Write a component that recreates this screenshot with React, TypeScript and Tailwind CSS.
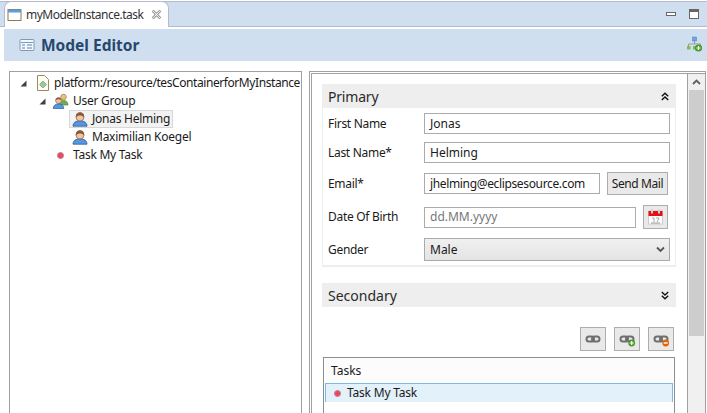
const font = { fontFamily: '"Noto Sans", sans-serif' };

function Person({ className = "" }: { className?: string }) {
  return (
    <svg width="16" height="16" viewBox="0 0 16 16" className={`shrink-0 ${className}`}>
      <path d="M1 15.2c0-3.6 3-5.4 7-5.4s7 1.8 7 5.4z" fill="#5596e0" stroke="#2b5f9e" strokeWidth="0.8" />
      <circle cx="8" cy="6" r="4" fill="#efc4a4" stroke="#a0694a" strokeWidth="0.8" />
      <path d="M3.9 6.4C3.4 2.8 5.8 1.2 8 1.2s4.6 1.6 4.1 5.2C11 4.8 9.2 4.4 8 4.4s-3 .4-4.1 2z" fill="#8a5a38" />
    </svg>
  );
}

function Group() {
  return (
    <svg width="18" height="16" viewBox="0 0 18 16" className="shrink-0">
      <circle cx="11.5" cy="4" r="2.8" fill="#e9c27e" stroke="#a08040" strokeWidth="0.7" />
      <path d="M7 12c0-3 2-4.5 4.5-4.5S16 9 16 12z" fill="#6fae4c" stroke="#4f8a36" strokeWidth="0.7" />
      <circle cx="6.5" cy="7.6" r="2.9" fill="#efc4a4" stroke="#a0694a" strokeWidth="0.7" />
      <path d="M3.6 7.4C3.4 5.4 5 4.4 6.5 4.4s3.1 1 2.9 3C8.4 6.4 7.2 6.2 6.5 6.2s-1.9.2-2.9 1.2z" fill="#8a5a38" />
      <path d="M1.2 15.5c0-3 2.2-4.6 5.3-4.6s5.3 1.6 5.3 4.6z" fill="#5596e0" stroke="#2b5f9e" strokeWidth="0.7" />
    </svg>
  );
}

function Tri() {
  return (
    <svg width="7" height="7" viewBox="0 0 7 7" className="shrink-0">
      <path d="M6.5 0.5V6.5H0.5z" fill="#404040" />
    </svg>
  );
}

function Dot({ className = "" }: { className?: string }) {
  return (
    <span className={`block h-[7px] w-[7px] shrink-0 rounded-full border border-[#c08090] bg-[#e84a58] ${className}`} />
  );
}

function Chevrons({ up }: { up?: boolean }) {
  return (
    <svg width="8" height="9" viewBox="0 0 8 9" className={up ? "" : "rotate-180"}>
      <path d="M0.8 4.2 4 1.2 7.2 4.2M0.8 8 4 5 7.2 8" fill="none" stroke="#111" strokeWidth="1.4" />
    </svg>
  );
}

function Field({ label, children, className = "" }: { label: string; children: React.ReactNode; className?: string }) {
  return (
    <div className={`flex items-center ${className}`}>
      <span className="w-[96px] shrink-0 text-[12px] leading-[16px] tracking-[-0.3px] text-[#1a1a1a]">{label}</span>
      {children}
    </div>
  );
}

function Input({ value, className = "", muted }: { value: string; className?: string; muted?: boolean }) {
  return (
    <div className={`flex items-center border border-[#ababab] bg-white pl-[5px] text-[12px] leading-[16px] ${muted ? "text-[#777]" : "text-[#1a1a1a]"} ${className}`}>
      {value}
    </div>
  );
}

function Link({ badge }: { badge?: "add" | "remove" }) {
  return (
    <svg width="18" height="16" viewBox="0 0 18 16">
      <rect x="2.5" y="5.5" width="7.5" height="5" rx="2.5" fill="none" stroke="#6e6e6e" strokeWidth="2" />
      <rect x="8" y="5.5" width="7.5" height="5" rx="2.5" fill="none" stroke="#6e6e6e" strokeWidth="2" />
      {badge && <circle cx="13.7" cy="12" r="3.4" fill={badge === "add" ? "#4a9a2c" : "#e0640c"} />}
      {badge === "add" && <path d="M13.7 10v4M11.7 12h4" stroke="#fff" strokeWidth="1.2" />}
      {badge === "remove" && <path d="M11.7 12h4" stroke="#fff" strokeWidth="1.4" />}
    </svg>
  );
}

function IconButton({ children }: { children: React.ReactNode }) {
  return (
    <div className="flex h-[24px] w-[26px] items-center justify-center border border-[#adadad] bg-[#e9e9e9]">{children}</div>
  );
}

export default function App() {
  return (
    <div style={font} className="flex h-[413px] w-[707px] flex-col overflow-hidden bg-white text-[#1a1a1a]">
      {/* tab strip */}
      <div className="mt-[1px] flex h-[26px] shrink-0 border-t border-b border-[#b8b8cf] bg-[#cfdfef] pl-[4px]">
        <div className="-mb-[1px] -mt-[1px] flex w-[165px] items-center rounded-t-[7px] border-x border-t border-[#b8b8cf] bg-white pl-[2px]">
          <svg width="16" height="14" viewBox="0 0 16 14" className="shrink-0">
            <rect x="1" y="1.5" width="13" height="11" fill="#fff" stroke="#8a7a55" />
            <rect x="1" y="1.5" width="13" height="3" fill="#5c9ed8" />
          </svg>
          <span className="ml-[3px] text-[12px] leading-[16px] tracking-[-0.5px] text-[#333]">myModelInstance.task</span>
          <svg width="11" height="11" viewBox="0 0 10 10" className="ml-[8px] shrink-0">
            <path d="M1.5 1.5 8.5 8.5M8.5 1.5 1.5 8.5" stroke="#777" strokeWidth="2.4" />
            <path d="M1.5 1.5 8.5 8.5M8.5 1.5 1.5 8.5" stroke="#f4f4f4" strokeWidth="1" />
          </svg>
        </div>
        <div className="ml-auto flex items-center gap-[13px] pr-[8px] pb-[1px]">
          <span className="block h-[4px] w-[10px] border border-[#666] bg-white" />
          <span className="block h-[10px] w-[10px] border border-[#666] border-t-[3px] bg-white" />
        </div>
      </div>

      {/* header */}
      <div className="ml-[4px] mt-[2px] flex h-[32px] shrink-0 items-center bg-[#cfdfef] pl-[15px] pr-[3px]">
        <svg width="16" height="14" viewBox="0 0 16 14" className="shrink-0">
          <rect x="1" y="1.5" width="14" height="11" rx="1" fill="#f4f7fb" stroke="#7f9ab8" />
          <path d="M2 4.5h12" stroke="#7f9ab8" />
          <path d="M3 7h3M3 10h3M8 7h5M8 10h5" stroke="#5a84b4" />
        </svg>
        <span className="ml-[6px] text-[15.5px] font-bold leading-[20px] text-[#27486e]">Model Editor</span>
        <svg width="18" height="18" viewBox="0 0 18 18" className="ml-auto shrink-0">
          <rect x="6.5" y="1" width="4" height="4" fill="#6ea4e8" stroke="#4a7cc0" strokeWidth="0.5" />
          <path d="M8.5 5v3M2.5 10V8h12v2" fill="none" stroke="#999" />
          <rect x="1" y="10" width="3.5" height="3.5" fill="#7cc050" />
          <rect x="7" y="10" width="3.5" height="3.5" fill="#7cc050" />
          <circle cx="12.5" cy="12" r="3.6" fill="#4a9a2c" />
          <path d="M12.5 10v4M10.5 12h4" stroke="#fff" strokeWidth="1.2" />
        </svg>
      </div>

      {/* body */}
      <div className="flex min-h-0 flex-1 pl-[9px] pt-[10px]">
        {/* tree */}
        <div className="h-[360px] w-[293px] shrink-0 overflow-hidden border border-[#a0a0a0] pl-[10px] pt-[2px] text-[12px] leading-[18px] tracking-[-0.25px]">
          <div className="flex h-[18px] items-center whitespace-nowrap">
            <Tri />
            <svg width="14" height="16" viewBox="0 0 14 16" className="ml-[9px] shrink-0">
              <path d="M1.5 0.5h7l4 4v11h-11z" fill="#fffdf5" stroke="#a08a5a" />
              <path d="M7 6l3.5 3.5L7 13 3.5 9.5z" fill="#9cc8a0" stroke="#70a078" strokeWidth="0.7" />
            </svg>
            <span className="ml-[4px] tracking-[-0.42px]">platform:/resource/tesContainerforMyInstance</span>
          </div>
          <div className="flex h-[18px] items-center pl-[19px]">
            <Tri />
            <span className="ml-[6px] flex"><Group /></span>
            <span className="ml-[3px]">User Group</span>
          </div>
          <div className="flex h-[18px] items-center pl-[49px]">
            <div className="flex h-[18px] w-[104px] items-center border border-[#d8d8d8] bg-[#f2f2f2] pl-[2px]">
              <Person />
              <span className="ml-[4px]">Jonas Helming</span>
            </div>
          </div>
          <div className="flex h-[18px] items-center pl-[52px]">
            <Person />
            <span className="ml-[4px]">Maximilian Koegel</span>
          </div>
          <div className="flex h-[18px] items-center pl-[37px]">
            <Dot />
            <span className="ml-[9px]">Task My Task</span>
          </div>
        </div>

        {/* detail */}
        <div className="ml-[7px] h-[360px] flex-1 border border-[#a0a0a0] py-[1px] pl-[1px]">
          <div className="flex h-full border-y border-l border-[#a0a0a0]">
            <div className="min-w-0 flex-1 pl-[10px] pr-[11px] pt-[10px]">
              <div className="flex h-[24px] items-center justify-between bg-[#eeeeee] pl-[6px] pr-[7px]">
                <span className="mt-[1px] text-[14px] leading-[18px] tracking-[-0.2px] text-[#2a2a2a]">Primary</span>
                <Chevrons up />
              </div>
              <div className="h-[159px] border-x border-b-2 border-[#eeeeee] pl-[5px] pr-[5px] pt-[5px]">
                <Field label="First Name"><Input value="Jonas" className="h-[21px] flex-1" /></Field>
                <Field label="Last Name*" className="mt-[8px]"><Input value="Helming" className="h-[21px] flex-1" /></Field>
                <Field label="Email*" className="mt-[9px]">
                  <Input value="jhelming@eclipsesource.com" className="h-[21px] w-[176px] whitespace-nowrap tracking-[-0.35px]" />
                  <div className="ml-[7px] flex h-[23px] w-[61px] items-center justify-center border border-[#adadad] bg-[#e9e9e9] text-[12px] leading-[16px] tracking-[-0.4px]">Send Mail</div>
                </Field>
                <Field label="Date Of Birth" className="mt-[10px]">
                  <Input value="dd.MM.yyyy" muted className="h-[21px] w-[212px]" />
                  <div className="ml-[7px] flex h-[24px] w-[25px] items-center justify-center border border-[#adadad] bg-[#e9e9e9]">
                    <svg width="15" height="16" viewBox="0 0 15 16">
                      <rect x="0.5" y="2" width="14" height="13" fill="#fff" stroke="#ccc" />
                      <rect x="0.5" y="2" width="14" height="5" fill="#e61010" />
                      <rect x="3" y="0.5" width="2" height="4" fill="#ccc" />
                      <rect x="10" y="0.5" width="2" height="4" fill="#ccc" />
                      <path d="M3 14h9" stroke="#999" />
                      <path d="M4 9h2v4M8 9h3l-2 4" fill="none" stroke="#aaa" />
                    </svg>
                  </div>
                </Field>
                <Field label="Gender" className="mt-[9px]">
                  <div className="flex h-[23px] flex-1 items-center justify-between border border-[#ababab] bg-gradient-to-b from-[#f0f0f0] to-[#e4e4e4] pl-[5px] pr-[2px] text-[12px] leading-[16px]">
                    <span>Male</span>
                    <svg width="9" height="7" viewBox="0 0 9 7" className="mr-[2px]">
                      <path d="M1 1.5 4.5 5 8 1.5" fill="none" stroke="#555" strokeWidth="1.8" />
                    </svg>
                  </div>
                </Field>
              </div>

              <div className="mt-[16px] flex h-[24px] items-center justify-between bg-[#eeeeee] pl-[6px] pr-[7px]">
                <span className="mt-[1px] text-[14px] leading-[18px] text-[#2a2a2a]">Secondary</span>
                <Chevrons />
              </div>

              <div className="mt-[20px] flex justify-end gap-[8px] pr-[2px]">
                <IconButton><Link /></IconButton>
                <IconButton><Link badge="add" /></IconButton>
                <IconButton><Link badge="remove" /></IconButton>
              </div>

              <div className="ml-[1px] mt-[6px] h-[80px] w-[352px] border border-[#8c8c8c] px-[1px]">
                <div className="flex h-[25px] items-center bg-[#fcfcfc] pl-[6px] text-[12px] leading-[16px]">Tasks</div>
                <div className="flex h-[19px] items-center border-x border-t border-[#7db9e4] bg-[#e3f1fa] pl-[8px] text-[12px] leading-[16px] tracking-[-0.2px]">
                  <Dot />
                  <span className="ml-[6px]">Task My Task</span>
                </div>
              </div>
            </div>

            {/* scrollbar */}
            <div className="flex w-[18px] shrink-0 flex-col border-l border-[#a0a0a0] bg-[#f0f0f0]">
              <div className="flex h-[16px] items-center justify-center">
                <svg width="9" height="6" viewBox="0 0 9 6"><path d="M1 5 4.5 1.5 8 5" fill="none" stroke="#606060" strokeWidth="1.8" /></svg>
              </div>
              <div className="ml-[1px] mr-[1px] h-[246px] bg-[#cdcdcd]" />
            </div>
          </div>
        </div>
        <div className="w-[1px] shrink-0" />
      </div>
    </div>
  );
}
